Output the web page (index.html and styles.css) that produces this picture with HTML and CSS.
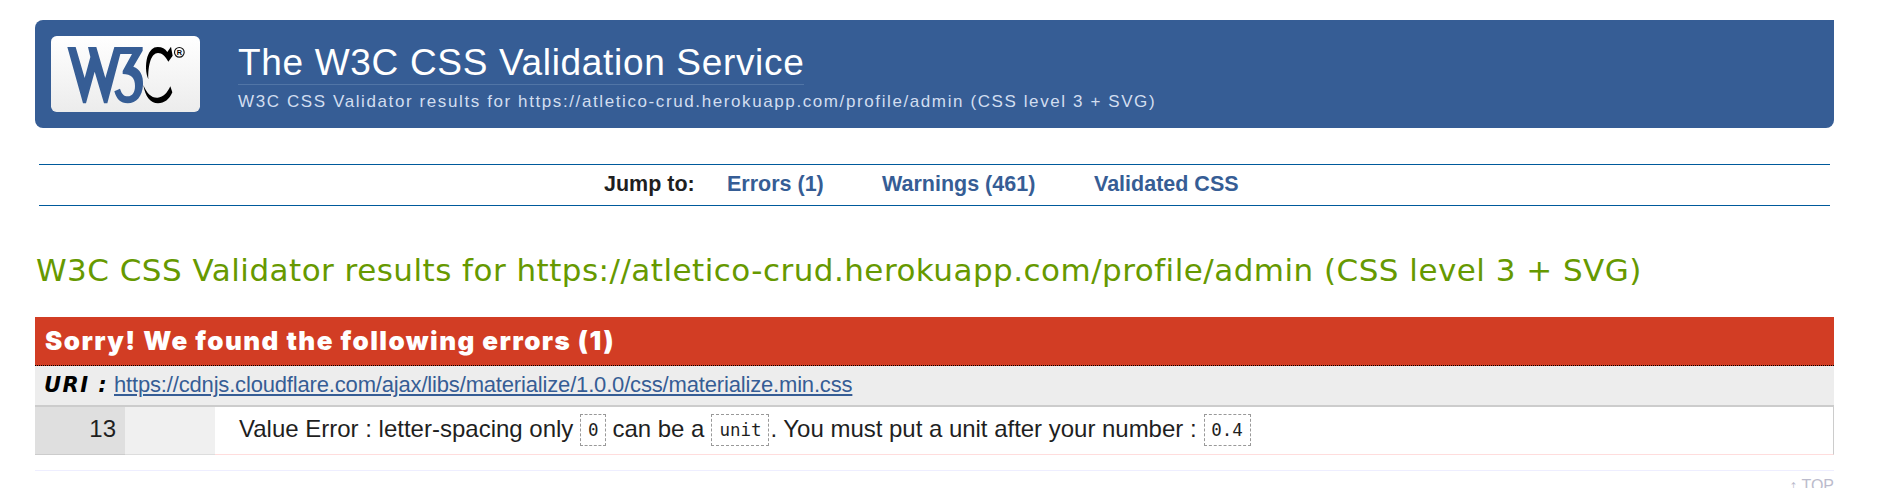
FILE: index.html
```html
<!DOCTYPE html>
<html lang="en">
<head>
<meta charset="utf-8">
<title>W3C CSS Validator results</title>
<link rel="stylesheet" href="styles.css">
</head>
<body>
<header class="banner">
  <svg class="logo" viewBox="34 34 447 228" role="img" aria-label="W3C">
    <defs><linearGradient id="plate" x1="0" y1="0" x2="0" y2="1"><stop offset="0" stop-color="#fff"/><stop offset="1" stop-color="#ececec"/></linearGradient></defs>
    <rect x="34" y="34" width="447" height="228" rx="17" fill="url(#plate)"/>
    <path fill="#365d95" d="M83 67H108L135 160L152 97L145 67H170L197 160L224 67H309V78L281 126C301 132 312 153 310 181C308 215 290 236 264 236C243 236 230 223 224 200L241 192C246 208 253 215 264 215C278 215 286 203 286 184C286 160 275 148 249 148V139L277 88H242L203 236H193L165 141L139 236H130Z"/>
    <path d="M394 66L399 93L386 111C377 94 367 85 355 85C335 85 325 119 326 164C318 145 317 119 323 97C330 77 340 67 354 67C368 67 376 72 383 82ZM311 181C322 207 335 220 354 219C372 218 382 205 392 185L398 203C389 224 374 236 355 236C332 236 317 216 311 181Z"/>
    <circle cx="419" cy="83" r="14.5" fill="none" stroke="#111" stroke-width="3.5"/>
    <text class="registered" x="419" y="91" text-anchor="middle">R</text>
  </svg>
  <div class="heading">
    <h1><span>The W3C CSS Validation Service</span></h1>
    <p>W3C CSS Validator results for https://atletico-crud.herokuapp.com/profile/admin (CSS level 3 + SVG)</p>
  </div>
</header>
<nav class="jump">
  <span class="jump-label">Jump to:</span>
  <a class="errors">Errors (1)</a>
  <a class="warnings">Warnings (461)</a>
  <a class="validated">Validated CSS</a>
</nav>
<main>
  <h2>W3C CSS Validator results for https://atletico-crud.herokuapp.com/profile/admin (CSS level 3 + SVG)</h2>
  <h3><span>Sorry! We found the following errors (1)</span></h3>
  <div class="uri"><b>URI :</b><a>https://cdnjs.cloudflare.com/ajax/libs/materialize/1.0.0/css/materialize.min.css</a></div>
  <div class="error-row">
    <div class="line-number">13</div>
    <div class="context"></div>
    <div class="message"><span>Value Error : letter-spacing only</span><code class="zero">0</code><span>can be a</span><code class="unit">unit</code><span class="rest">. You must put a unit after your number :</span><code class="value">0.4</code></div>
  </div>
</main>
<div class="top"><a>↑ TOP</a></div>
</body>
</html>
```
FILE: styles.css
```css
* { box-sizing: border-box; }
html { overflow: hidden; }
body {
  margin: 0;
  padding: 20px 44px 0 35px;
  height: 488px;
  overflow: hidden;
  background: #fff;
  color: #1f1f1f;
  font-family: "Liberation Sans", Arial, sans-serif;
  white-space: nowrap;
}
h1, h2, h3, p { margin: 0; font-weight: normal; }
.banner {
  display: flex;
  height: 108px;
  padding: 16px 0 0 16px;
  background: #365d95;
  border-radius: 8px 0 8px 8px;
  color: #fff;
}
.logo { width: 149px; height: 76px; flex: none; }
.registered { font: bold 22px "Liberation Sans", sans-serif; }
.heading { margin-left: 38px; }
h1 { height: 49px; font-size: 37px; line-height: 53px; letter-spacing: 0.67px; }
h1 span { display: inline-block; height: 49px; border-bottom: 1px solid #5175a6; }
.banner p { font-size: 17px; line-height: 20px; letter-spacing: 1.6px; margin-top: 7px; color: #d2def0; }
.jump {
  display: flex;
  height: 42px;
  margin: 36px 4px 0;
  padding-left: 565px;
  border-top: 1px solid #005a9c;
  border-bottom: 1px solid #005a9c;
  font-size: 21.5px;
  font-weight: bold;
  line-height: 39px;
}
.jump a { color: #365d95; }
.jump-label { width: 123px; }
.errors { width: 155px; }
.warnings { width: 212px; }
h2 {
  margin-top: 42px;
  height: 69px;
  padding-left: 1px;
  font: 31px/44px "DejaVu Sans", Verdana, sans-serif;
  letter-spacing: 0.47px;
  color: #690;
}
h3 {
  height: 49px;
  padding-left: 10px;
  background: #d23d24;
  border-bottom: 1px dotted #000;
  color: #fff;
  font: 900 26px/47px Inter, "Arial Black", sans-serif;
  letter-spacing: 1.43px;
}
.uri {
  display: flex;
  height: 41px;
  padding-left: 9px;
  background: #ededed;
  border-bottom: 2px solid #ccc;
  font-size: 22px;
  letter-spacing: -0.17px;
  line-height: 38px;
}
.uri b {
  width: 70px;
  color: #000;
  font: italic bold 21px/38px "DejaVu Sans", Verdana, sans-serif;
  letter-spacing: 1.5px;
}
.uri a { color: #365d95; text-decoration: underline; text-decoration-thickness: 2px; text-underline-offset: 2px; }
.error-row { display: flex; height: 48px; font-size: 24px; line-height: 44px; }
.line-number {
  width: 90px;
  padding-right: 9px;
  background: #dfdfdf;
  border-bottom: 1px solid #ccc;
  text-align: right;
}
.context { width: 90px; background: #f0f0f0; border-bottom: 1px solid #ddd; }
.message {
  display: flex;
  flex: 1;
  padding-left: 24px;
  border-right: 1px solid #ccc;
  border-bottom: 1px solid #fdd;
}
code {
  height: 32px;
  margin: 7px 6px 0 7px;
  border: 1px dashed #999;
  font: 17.5px/31px "DejaVu Sans Mono", monospace;
  text-align: center;
}
.zero { width: 26px; }
.unit { width: 58px; margin-right: 1px; }
.rest { letter-spacing: -0.02px; }
.value { width: 47px; }
.top {
  margin-top: 15px;
  border-top: 1px solid #eef;
  color: #bbc;
  font-size: 16px;
  line-height: 30px;
  text-align: right;
}
```
